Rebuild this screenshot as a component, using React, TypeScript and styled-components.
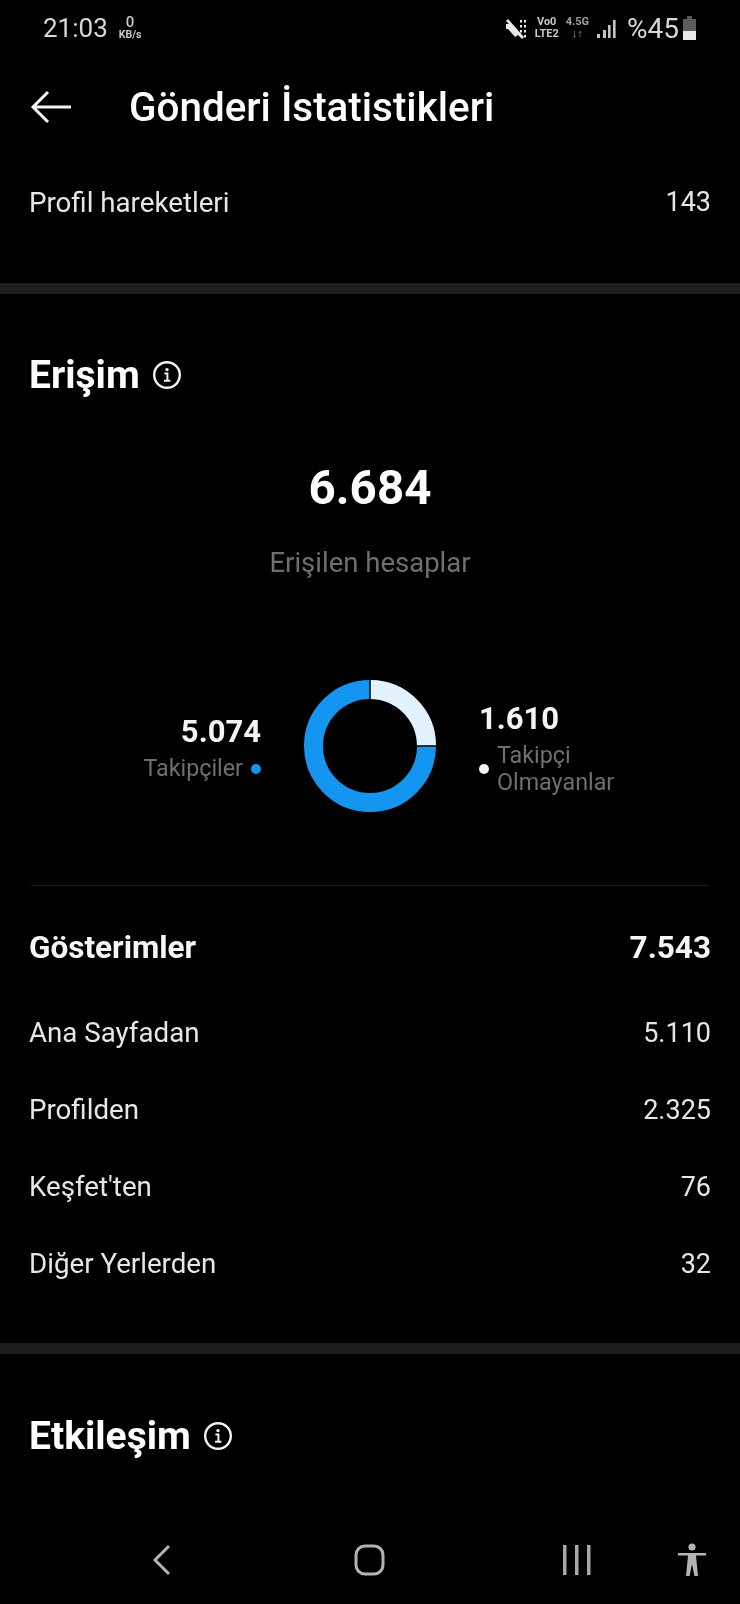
import React from 'react';
import styled, { createGlobalStyle } from 'styled-components';

const GlobalStyle = createGlobalStyle`
  html, body {
    margin: 0;
    padding: 0;
    background: #000;
  }
  body {
    font-family: Roboto, "Liberation Sans", sans-serif;
    color: #fff;
  }
`;

type Stat = { label: string; value: string };

const sources: Stat[] = [
  { label: 'Ana Sayfadan', value: '5.110' },
  { label: 'Profilden', value: '2.325' },
  { label: "Keşfet'ten", value: '76' },
  { label: 'Diğer Yerlerden', value: '32' },
];

const InfoIcon = () => (
  <svg width="30" height="30" viewBox="0 0 30 30" fill="none" stroke="#f2f2f2">
    <circle cx="15" cy="15" r="12.8" strokeWidth="2.4" />
    <circle cx="15" cy="9.6" r="1.7" fill="#f2f2f2" stroke="none" />
    <path d="M12.4 13.6H15.4V20.4M12 20.8H18.4" strokeWidth="2" />
  </svg>
);

const Donut = () => (
  <svg width="134" height="134" viewBox="0 0 134 134" fill="none">
    <circle cx="67" cy="67" r="56.5" stroke="#1495f0" strokeWidth="19" />
    <path d="M67 10.5A56.5 56.5 0 0 1 123.5 67" stroke="#e3f1fc" strokeWidth="19" />
    <path d="M67 0V21M113 67H134" stroke="#000" strokeWidth="1.5" />
  </svg>
);

const App: React.FC = () => (
  <>
    <GlobalStyle />
    <Screen>
      <StatusBar>
        <StatusLeft>
          <Clock>21:03</Clock>
          <NetSpeed>
            <b>0</b>
            <span>KB/s</span>
          </NetSpeed>
        </StatusLeft>
        <StatusRight>
          <svg width="23" height="23" viewBox="0 0 23 23" fill="#e8e8e8">
            <path d="M1 4L3 2L19 20L17 22L13 18L10 20L3 12H1V7H4Z" />
            <path d="M15 3h2v2.4h-2zM19 3h2v2.4h-2zM15 8h2v2.4h-2zM19 8h2v2.4h-2zM15 13h2v2.4h-2zM19 13h2v2.4h-2zM19 18h2v2.4h-2z" />
          </svg>
          <TinyStack>
            <span>Vo0</span>
            <span>LTE2</span>
          </TinyStack>
          <TinyStack $dim>
            <span>4.5G</span>
            <span>↓↑</span>
          </TinyStack>
          <svg width="20" height="22" viewBox="0 0 20 22" fill="#c4c4c4">
            <rect x="1" y="17" width="3" height="4" />
            <rect x="7" y="13" width="3" height="8" />
            <rect x="12" y="8" width="2.6" height="13" />
            <rect x="17" y="3" width="2.6" height="18" />
          </svg>
          <Battery>%45</Battery>
          <svg width="15" height="24" viewBox="0 0 15 24">
            <rect x="5" y="0" width="5" height="3" fill="#555" />
            <rect x="1" y="3" width="13" height="12" fill="#5c5c5c" />
            <rect x="1" y="15" width="13" height="9" fill="#e8e8e8" />
          </svg>
        </StatusRight>
      </StatusBar>

      <Header>
        <svg width="42" height="34" viewBox="0 0 42 34" fill="none" stroke="#f4f4f4" strokeWidth="3">
          <path d="M41 17H3M18 2L3 17L18 32" />
        </svg>
        <Title>Gönderi İstatistikleri</Title>
      </Header>

      <ProfileRow>
        <RowLabel>Profil hareketleri</RowLabel>
        <RowValue>143</RowValue>
      </ProfileRow>

      <ThickDivider $top={37} />

      <SectionHead $top={56}>
        <SectionTitle>Erişim</SectionTitle>
        <InfoIcon />
      </SectionHead>

      <Summary>
        <BigNumber>6.684</BigNumber>
        <Caption>Erişilen hesaplar</Caption>
      </Summary>

      <ChartRow>
        <LegendLeft>
          <LegendNumber>5.074</LegendNumber>
          <LegendLine>
            <LegendText>Takipçiler</LegendText>
            <Dot $color="#1495f0" />
          </LegendLine>
        </LegendLeft>
        <Donut />
        <LegendRight>
          <LegendNumber>1.610</LegendNumber>
          <LegendLine>
            <Dot $color="#f4f4f4" />
            <LegendText>
              Takipçi
              <br />
              Olmayanlar
            </LegendText>
          </LegendLine>
        </LegendRight>
      </ChartRow>

      <ThinDivider />

      <TotalRow>
        <TotalText>Gösterimler</TotalText>
        <TotalText>7.543</TotalText>
      </TotalRow>

      <Sources>
        {sources.map((s) => (
          <SourceRow key={s.label}>
            <RowLabel>{s.label}</RowLabel>
            <RowValue>{s.value}</RowValue>
          </SourceRow>
        ))}
      </Sources>

      <ThickDivider $top={41} />

      <SectionHead $top={57}>
        <SectionTitle>Etkileşim</SectionTitle>
        <InfoIcon />
      </SectionHead>

      <NavBar>
        <svg width="20" height="34" viewBox="0 0 20 34" fill="none" stroke="#b4b4b4" strokeWidth="3">
          <path d="M17 3L3 17L17 31" />
        </svg>
        <svg width="32" height="34" viewBox="0 0 32 34" fill="none" stroke="#b4b4b4" strokeWidth="3">
          <rect x="2" y="3" width="27" height="28" rx="9" />
        </svg>
        <svg width="30" height="32" viewBox="0 0 30 32" fill="#a8a8a8">
          <rect x="1" y="1" width="3.5" height="30" />
          <rect x="13" y="1" width="3.5" height="30" />
          <rect x="25" y="1" width="3.5" height="30" />
        </svg>
        <svg width="30" height="34" viewBox="0 0 30 34" fill="#b4b4b4">
          <circle cx="15" cy="4" r="3.6" />
          <path d="M1 10H29V12.6H19L21 33H17.4L15 21L12.6 33H9L11 12.6H1Z" />
        </svg>
      </NavBar>
    </Screen>
  </>
);

export default App;

const Screen = styled.div`
  width: 740px;
  height: 1604px;
  overflow: hidden;
  display: flex;
  flex-direction: column;
  background: #000;
  filter: blur(0.5px);
`;

const StatusBar = styled.div`
  height: 56px;
  flex: none;
  display: flex;
  align-items: center;
  justify-content: space-between;
  padding: 0 43px 0 43px;
`;

const StatusLeft = styled.div`
  display: flex;
  align-items: center;
  gap: 11px;
`;

const Clock = styled.span`
  font-size: 26px;
  color: #d8d8d8;
`;

const NetSpeed = styled.span`
  display: flex;
  flex-direction: column;
  align-items: center;
  line-height: 1;
  color: #c8c8c8;
  b {
    font-size: 15px;
    font-weight: 500;
  }
  span {
    font-size: 10.5px;
    font-weight: 700;
  }
`;

const StatusRight = styled.div`
  display: flex;
  align-items: center;
  gap: 7px;
`;

const TinyStack = styled.span<{ $dim?: boolean }>`
  display: flex;
  flex-direction: column;
  align-items: center;
  font-size: 11px;
  font-weight: 700;
  line-height: 12px;
  color: ${(p) => (p.$dim ? '#a0a0a0' : '#c8c8c8')};
`;

const Battery = styled.span`
  font-size: 28px;
  color: #d8d8d8;
  margin-left: 4px;
  margin-right: -4px;
`;

const Header = styled.header`
  height: 102px;
  flex: none;
  display: flex;
  align-items: center;
  gap: 57px;
  padding-left: 30px;
`;

const Title = styled.h1`
  margin: 0;
  font-size: 40.4px;
  font-weight: 500;
  color: #fff;
`;

const RowLabel = styled.span`
  font-size: 27.7px;
  color: #e6e6e6;
`;

const RowValue = styled.span`
  font-size: 27px;
  color: #e6e6e6;
`;

const ProfileRow = styled.div`
  height: 88px;
  flex: none;
  display: flex;
  align-items: center;
  justify-content: space-between;
  padding: 0 29px;
`;

const ThickDivider = styled.div<{ $top: number }>`
  height: 11px;
  flex: none;
  margin-top: ${(p) => p.$top}px;
  background: #1e1e1e;
`;

const SectionHead = styled.div<{ $top: number }>`
  height: 50px;
  flex: none;
  margin-top: ${(p) => p.$top}px;
  display: flex;
  align-items: center;
  gap: 12px;
  padding-left: 29px;
`;

const SectionTitle = styled.h2`
  margin: 0;
  font-size: 39px;
  font-weight: 700;
  color: #fff;
`;

const Summary = styled.div`
  flex: none;
  margin-top: 60px;
  display: flex;
  flex-direction: column;
  align-items: center;
`;

const BigNumber = styled.div`
  height: 56px;
  line-height: 56px;
  font-size: 47.5px;
  font-weight: 700;
  color: #fff;
`;

const Caption = styled.div`
  margin-top: 31px;
  height: 32px;
  line-height: 32px;
  font-size: 27.5px;
  color: #6f6f6f;
`;

const ChartRow = styled.div`
  position: relative;
  flex: none;
  margin-top: 100px;
  height: 134px;
  display: flex;
  justify-content: center;
`;

const LegendLeft = styled.div`
  position: absolute;
  right: 479px;
  top: 34px;
  display: flex;
  flex-direction: column;
  align-items: flex-end;
`;

const LegendRight = styled.div`
  position: absolute;
  left: 479px;
  top: 21px;
  display: flex;
  flex-direction: column;
`;

const LegendNumber = styled.div`
  font-size: 31px;
  line-height: 38px;
  font-weight: 700;
  color: #f4f4f4;
`;

const LegendLine = styled.div`
  display: flex;
  align-items: center;
  gap: 8px;
  margin-top: 4px;
`;

const LegendText = styled.span`
  font-size: 23.3px;
  line-height: 27px;
  color: #6f6f6f;
`;

const Dot = styled.i<{ $color: string }>`
  width: 10px;
  height: 10px;
  border-radius: 50%;
  background: ${(p) => p.$color};
`;

const ThinDivider = styled.div`
  height: 1px;
  flex: none;
  margin: 72px 30px 0;
  background: #1a1a1a;
`;

const TotalRow = styled.div`
  height: 50px;
  flex: none;
  margin-top: 36px;
  display: flex;
  align-items: center;
  justify-content: space-between;
  padding: 0 29px;
`;

const TotalText = styled.span`
  font-size: 31.5px;
  font-weight: 700;
  color: #f6f6f6;
`;

const Sources = styled.div`
  flex: none;
  margin-top: 22px;
  display: flex;
  flex-direction: column;
`;

const SourceRow = styled.div`
  height: 77px;
  display: flex;
  align-items: center;
  justify-content: space-between;
  padding: 0 29px;
`;

const NavBar = styled.nav`
  margin-top: auto;
  height: 84px;
  flex: none;
  display: grid;
  grid-template-columns: 202px 208px 115px 1fr;
  justify-items: start;
  align-items: center;
  padding-left: 152px;
  padding-bottom: 2px;
`;
